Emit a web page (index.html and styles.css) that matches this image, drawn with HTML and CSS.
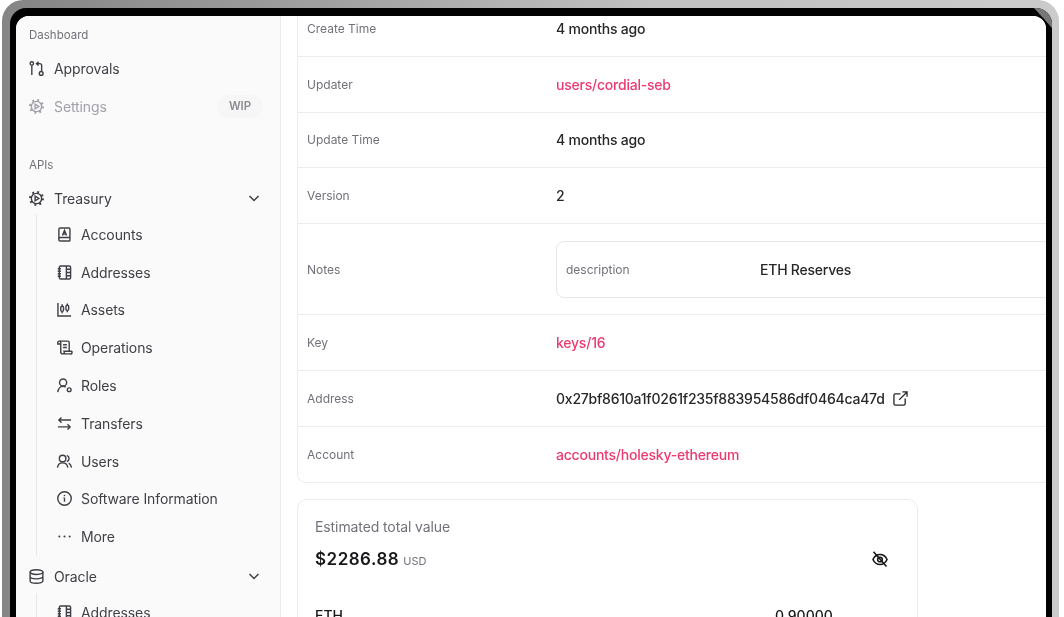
FILE: index.html
```html
<!DOCTYPE html>
<html lang="en">
<head>
<meta charset="utf-8">
<title>Address details</title>
<link rel="stylesheet" href="styles.css">
</head>
<body>
<div class="bezel">
  <div class="glass">
    <span class="antenna"></span>
    <div class="screen">
      <aside class="sidebar">
        <p class="section first">Dashboard</p>
        <a class="item"><svg class="ic" viewBox="0 0 16 16"><circle cx="3" cy="2.600" r="1.800"/><path d="M3 4.400V15M10.200 .8 8 2.800l2.200 2M8 2.800h3.500a2 2 0 0 1 2 2v6"/><circle cx="13" cy="13.200" r="2"/></svg><span>Approvals</span></a>
        <a class="item muted"><svg class="ic" viewBox="0 0 16 16"><use href="#gear"/></svg><span>Settings</span><em class="wip">WIP</em></a>
        <p class="section apis">APIs</p>
        <a class="item"><svg class="ic" viewBox="0 0 16 16"><use href="#gear"/></svg><span>Treasury</span><svg class="chev" viewBox="0 0 12 12"><path d="m1.500 4 4.500 4.500L10.500 4"/></svg></a>
        <div class="sub">
          <a class="item"><svg class="ic" viewBox="0 0 16 16"><path d="M3.500 1h9.300a1 1 0 0 1 1 1v12a1 1 0 0 1-1 1H3.500a1.500 1.500 0 0 1-1.500-1.500v-11A1.500 1.500 0 0 1 3.500 1Z"/><path d="M2 12.500c0-.8.7-1.300 1.500-1.300h10.300M5.800 9 8 3.500 10.200 9M6.500 7.400h3"/></svg><span>Accounts</span></a>
          <a class="item"><svg class="ic" viewBox="0 0 16 16"><use href="#book"/></svg><span>Addresses</span></a>
          <a class="item"><svg class="ic" viewBox="0 0 16 16"><path d="M1 1v14h14M5.500 2.500v2M5.500 10v2M11 1.500v2M11 9v2"/><rect x="4" y="4.500" width="3" height="5.500" rx="1.500"/><rect x="9.500" y="3.500" width="3" height="5.500" rx="1.500"/></svg><span>Assets</span></a>
          <a class="item"><svg class="ic" viewBox="0 0 16 16"><path d="M3 1.200h8.500a1.500 1.500 0 0 1 1.500 1.500V12M6.500 5h4M6.500 8h4M.8 2.800a1.600 1.600 0 0 1 3.200 0v1.500H.8ZM4 2.800v10a2 2 0 0 0 2 2h8a1.500 1.500 0 0 0 1.200-2.800H7.500c.5 1 .5 2-.5 2.800"/></svg><span>Operations</span></a>
          <a class="item"><svg class="ic" viewBox="0 0 16 16"><circle cx="6.500" cy="4.800" r="3.800"/><path d="M.8 15c.5-3.200 2.800-6.200 5.700-6.200 1 0 1.900.3 2.700.9"/><circle cx="13" cy="12.500" r="2"/></svg><span>Roles</span></a>
          <a class="item"><svg class="ic" viewBox="0 0 16 16"><path d="M4.800 1.500 2 4.300l2.800 2.800M2 4.300h13M11.200 8.800 14 11.600l-2.800 2.800M14 11.600H1"/></svg><span>Transfers</span></a>
          <a class="item"><svg class="ic" viewBox="0 0 16 16"><circle cx="6" cy="4.800" r="3.500"/><path d="M.5 14.500c.4-3 2.800-5 5.500-5s5.100 2 5.500 5M10.500 1.500a3.500 3.500 0 0 1 0 6.600M12.500 9.800c1.500.8 2.600 2.500 3 4.700"/></svg><span>Users</span></a>
          <a class="item"><svg class="ic" viewBox="0 0 16 16"><circle cx="8" cy="8" r="7.200"/><path d="M8 7.500v4M7 7.500h1"/><circle class="dot" cx="8" cy="4.800" r=".9"/></svg><span>Software Information</span></a>
          <a class="item"><svg class="ic" viewBox="0 0 16 16"><circle class="dot" cx="2.500" cy="8" r="1.100"/><circle class="dot" cx="8" cy="8" r="1.100"/><circle class="dot" cx="13.500" cy="8" r="1.100"/></svg><span>More</span></a>
        </div>
        <a class="item oracle"><svg class="ic" viewBox="0 0 16 16"><ellipse cx="8" cy="3.300" rx="6.800" ry="2.500"/><path d="M1.200 3.300v9.400c0 1.400 3 2.500 6.800 2.500s6.800-1.100 6.800-2.500V3.300M1.200 8c0 1.400 3 2.500 6.800 2.500s6.800-1.100 6.800-2.500"/></svg><span>Oracle</span><svg class="chev" viewBox="0 0 12 12"><path d="m1.500 4 4.500 4.500L10.500 4"/></svg></a>
        <div class="sub">
          <a class="item"><svg class="ic" viewBox="0 0 16 16"><use href="#book"/></svg><span>Addresses</span></a>
        </div>
      </aside>
      <main class="main">
        <section class="details">
          <div class="row"><span class="label">Create Time</span><span class="value">4 months ago</span></div>
          <div class="row"><span class="label">Updater</span><a class="value link">users/cordial-seb</a></div>
          <div class="row"><span class="label">Update Time</span><span class="value">4 months ago</span></div>
          <div class="row"><span class="label">Version</span><span class="value">2</span></div>
          <div class="row notes"><span class="label">Notes</span>
            <div class="note-box"><span class="note-key">description</span><span class="value">ETH Reserves</span></div>
          </div>
          <div class="row"><span class="label">Key</span><a class="value link">keys/16</a></div>
          <div class="row"><span class="label">Address</span><span class="value addr">0x27bf8610a1f0261f235f883954586df0464ca47d<svg class="ext" viewBox="0 0 16 16"><path d="M8 3H2.500A1.500 1.500 0 0 0 1 4.500v9A1.500 1.500 0 0 0 2.500 15h9a1.500 1.500 0 0 0 1.500-1.500V8M6.500 9.500 15 1M10 1h5v5"/></svg></span></div>
          <div class="row"><span class="label">Account</span><a class="value link">accounts/holesky-ethereum</a></div>
        </section>
        <section class="balance">
          <p class="bal-title">Estimated total value</p>
          <div class="bal-total">
            <strong class="amount">$2286.88</strong><span class="usd">USD</span>
            <svg class="eye" viewBox="0 0 16 16"><path d="M1 8.500C2.500 5 5 3.500 8 3.500s5.500 1.500 7 5c-1.500 3.500-4 5-7 5s-5.500-1.500-7-5Z"/><circle cx="8" cy="8.500" r="2.300"/><path class="slash" d="M1.500 .8 14.500 15.500"/></svg>
          </div>
          <div class="asset"><span class="sym">ETH</span><span class="qty">0.90000</span></div>
        </section>
      </main>
    </div>
  </div>
</div>
<svg class="defs" width="0" height="0" aria-hidden="true">
  <symbol id="gear" viewBox="0 0 16 16"><circle cx="8" cy="8" r="5.500"/><circle class="teeth" cx="8" cy="8" r="6.900"/><path d="m6.500 5.500 4 2.500-4 2.500Z"/></symbol>
  <symbol id="book" viewBox="0 0 16 16"><rect x="2.500" y="1" width="12" height="14" rx="1.500"/><path d="M10 1v14M.8 4h3.400M.8 6.700h3.400M.8 9.400h3.400M.8 12h3.400M10 4.500h4.500M10 8h4.500M10 11.500h4.500"/></symbol>
</svg>
</body>
</html>
```
FILE: styles.css
```css
* { box-sizing: border-box; }
html, body { margin: 0; height: 617px; overflow: hidden; background: #fff; }
body { font-family: Inter, "Noto Sans", sans-serif; color: #27272a; }
.defs { position: absolute; }
p { margin: 0; }
.bezel {
  width: 1057px; height: 680px; margin-left: 2px; padding: 8px 7px 0 8px;
  border-radius: 21px 21px 0 0;
  background: linear-gradient(90deg, #858585 0, #9b9b9b 25%, #c0c0c0 60%, #cbcbcb 100%);
  filter: blur(.4px);
}
.glass {
  position: relative; height: 100%; padding: 8px 6px 0 6px;
  border-radius: 16px 16px 0 0; background: #020202;
}
.antenna {
  position: absolute; top: 0; right: 0; width: 20px; height: 20px;
  border-top: 8px solid #777; border-right: 6px solid #777;
  border-top-right-radius: 16px;
  clip-path: polygon(10% 0, 100% 0, 100% 100%);
}
.screen {
  position: relative; display: flex; height: 100%; overflow: hidden;
  border-radius: 13px 13px 0 0; background: #fff;
}
.sidebar {
  flex: 0 0 265px; padding: 0 13px 0 13px; background: #fafafa;
  border-right: 1px solid #ececec; font-size: 14px; color: #3f3f46;
}
.section { font-size: 11.500px; line-height: 16px; color: #71717a; }
.first { margin-top: 11px; }
.apis { margin-top: 31px; margin-bottom: 7px; }
.item { display: flex; align-items: center; gap: 10px; height: 37.800px; letter-spacing: -.1px; }
.first + .item { margin-top: 7px; }
.ic { flex: none; width: 15px; height: 15px; fill: none; stroke: currentColor; stroke-width: 1.500; overflow: visible; }
.ic .dot { fill: currentColor; stroke: none; }
.teeth { stroke-width: 2.200; stroke-dasharray: 2 3.420; }
.muted { color: #a1a1aa; }
.wip {
  margin-left: auto; margin-right: 4px; padding: 0 12px; height: 23px; line-height: 23px;
  border-radius: 12px; background: #f6f6f6; font-size: 11.500px; font-weight: 600;
  font-style: normal; color: #8c8c93;
}
.chev { width: 12px; height: 12px; margin-left: auto; margin-right: 7px; fill: none; stroke: #3f3f46; stroke-width: 1.500; }
.sub { margin-left: 7px; padding-left: 20px; border-left: 1px solid #e8e8ea; margin-top: -2px; }
.sub .item { gap: 9px; }
.oracle { margin-top: 2px; }
.main { flex: 1; min-width: 0; padding: 0 0 0 16px; background: #fff; }
.details {
  width: 900px; margin-top: -15.600px; border: 1px solid #ececee; border-radius: 9px;
  font-size: 14px;
}
.row { display: flex; align-items: center; height: 55.600px; border-bottom: 1px solid #ececee; }
.row:last-child { border-bottom: 0; height: 55px; }
.notes { height: 91.700px; }
.label { flex: 0 0 258px; padding-left: 9px; font-size: 12px; color: #71717a; }
.value { color: #27272a; font-weight: 500; letter-spacing: -.22px; }
.link { color: #ec3a71; }
.addr { display: flex; align-items: center; gap: 8px; letter-spacing: -.23px; }
.ext { width: 15px; height: 15px; fill: none; stroke: #27272a; stroke-width: 1.400; }
.note-box {
  display: flex; align-items: center; flex: 1; height: 57px;
  border: 1px solid #e6e6e8; border-radius: 8px; padding-left: 9px;
}
.note-key { flex: 0 0 194px; font-size: 12px; color: #71717a; }
.balance {
  width: 621px; height: 200px; margin-top: 16.200px; padding: 18px 17px 0;
  border: 1px solid #ececee; border-radius: 10px;
}
.bal-title { font-size: 14px; line-height: 18px; color: #71717a; letter-spacing: -.1px; }
.bal-total { display: flex; align-items: center; margin-top: 11px; height: 24px; }
.amount { font-size: 17px; font-weight: 600; letter-spacing: .5px; color: #18181b; }
.usd { margin-left: 4px; margin-top: 4px; font-size: 11px; color: #71717a; }
.eye { width: 16px; height: 16px; margin-left: auto; margin-right: 12px; fill: none; stroke: #18181b; stroke-width: 1.600; overflow: visible; }
.asset { display: flex; margin-top: 36px; font-size: 14px; font-weight: 500; color: #18181b; }
.sym { flex: 0 0 460px; }
```
